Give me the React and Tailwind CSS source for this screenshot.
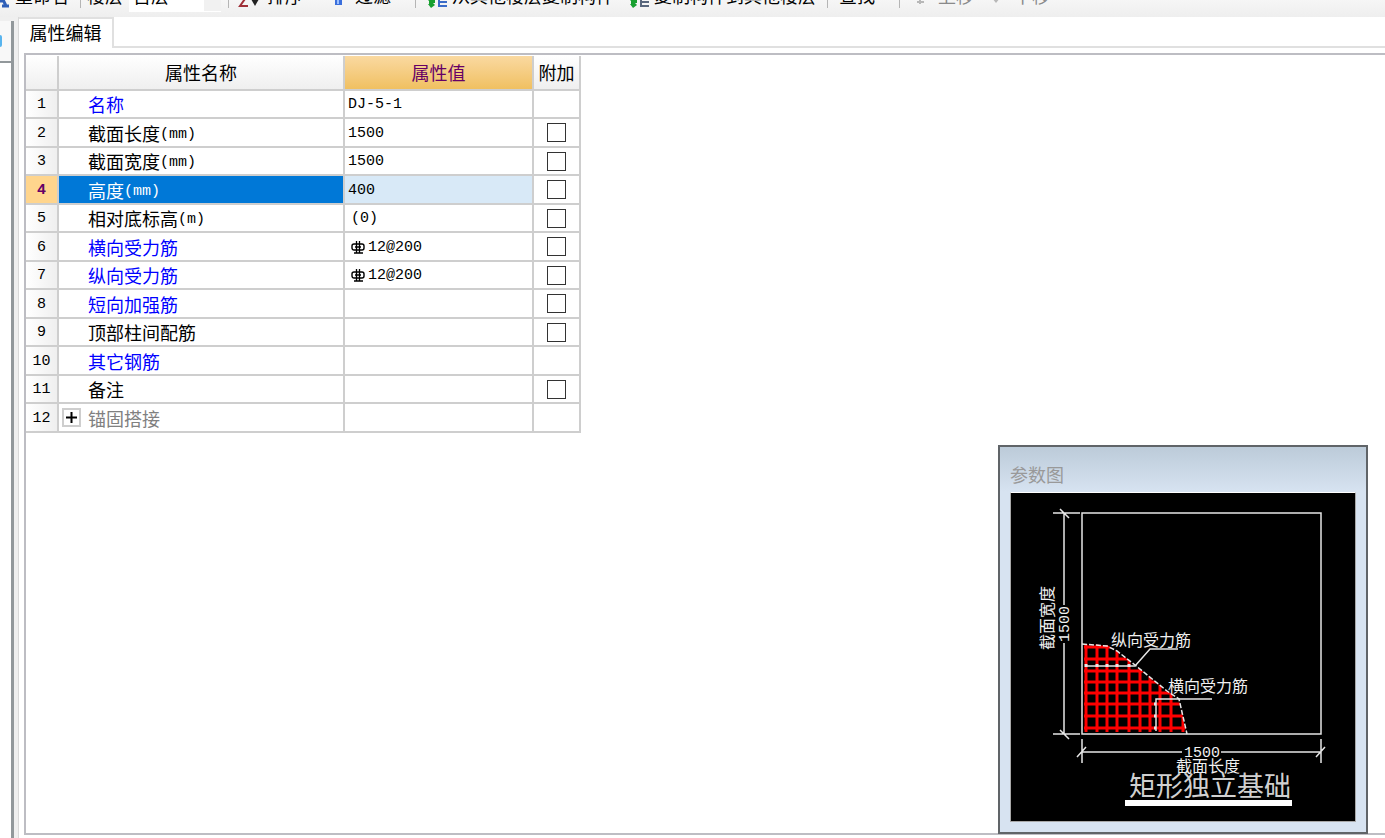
import React, { useState } from "react";

const properties = [
  { name: "名称", value: "DJ-5-1", color: "text-[#0000ff]" },
  { name: "截面长度", unit: "(mm)", value: "1500", extra: true },
  { name: "截面宽度", unit: "(mm)", value: "1500", extra: true },
  { name: "高度", unit: "(mm)", value: "400", extra: true },
  { name: "相对底标高", unit: "(m)", value: "(0)", extra: true, indent: true },
  { name: "横向受力筋", value: "12@200", rebar: true, color: "text-[#0000ff]", extra: true, indent: true },
  { name: "纵向受力筋", value: "12@200", rebar: true, color: "text-[#0000ff]", extra: true, indent: true },
  { name: "短向加强筋", value: "", color: "text-[#0000ff]", extra: true },
  { name: "顶部柱间配筋", value: "", extra: true },
  { name: "其它钢筋", value: "", color: "text-[#0000ff]" },
  { name: "备注", value: "", extra: true },
  { name: "锚固搭接", value: "", color: "text-[#808080]", group: true },
];

// Position des barres du treillis
const barsX = [75, 86, 96, 106, 118, 129, 139, 149, 160, 172];
const barsY = [154, 166, 178, 189, 200, 211, 223, 235];

const Separator = ({ className }) => (
  <span className={`mb-1 h-5 w-px shrink-0 bg-[#b5b5b5] ${className}`} />
);

const ToolButton = ({ children, className }) => (
  <button type="button" className={`mb-1.5 flex shrink-0 items-end leading-[18px] ${className}`}>
    {children}
  </button>
);

const CopyIcon = ({ color }) => (
  <svg width="22" height="18" viewBox="0 0 22 18" className="-mb-0.5 shrink-0">
    <path d="M0 8l4-4v3h5v6H7l2 2-4 3-3-4h1V11z" fill="#18a030" />
    <path d="M13 1v16M13 4h8M13 8h8M13 12h8M13 16h8" stroke={color} strokeWidth="2" />
  </svg>
);

const RebarSign = () => (
  <svg width="14" height="14" viewBox="0 0 14 14" className="mr-[3px] shrink-0" fill="none" stroke="#000">
    <rect x="1" y="3" width="12" height="6" rx="2" strokeWidth="1.4" />
    <path d="M5.5 0v12M8.5 0v12M3 12h9M4 6h6" strokeWidth="1.3" />
  </svg>
);

const Toolbar = () => (
  <div className="flex h-[17px] shrink-0 items-end overflow-hidden bg-linear-to-b from-[#f6f6f6] to-[#eeeeee] pb-[5px]">
    <ToolButton>
      <svg width="9" height="18" viewBox="0 0 9 18" className="-mb-0.5 mr-1.5">
        <path d="M0 3l6 13M0 11h4M2 16h7" stroke="#2f5fb8" strokeWidth="3" fill="none" />
      </svg>
      重命名
    </ToolButton>
    <Separator className="ml-[11px]" />
    <label htmlFor="floor" className="mb-1.5 ml-1.5 shrink-0 leading-[18px]">楼层</label>
    <div className="ml-1.5 flex h-[26px] w-[92px] shrink-0 bg-white">
      <select id="floor" className="w-[75px] appearance-none bg-white pb-1 pl-1 leading-[18px]">
        <option>首层</option>
      </select>
      <span className="grow border-b border-white bg-[#f1f1f1]" />
    </div>
    <Separator className="ml-[7px]" />
    <ToolButton className="ml-[9px]">
      <svg width="25" height="18" viewBox="0 0 25 18" className="-mb-0.5 mr-1">
        <path d="M1 6h8L2 16h8" fill="none" stroke="#a03038" strokeWidth="2" />
        <path d="M17 3v8" stroke="#222" strokeWidth="2" />
        <path d="M13 9h8l-4 7z" fill="#222" />
      </svg>
      排序
    </ToolButton>
    <ToolButton className="ml-[30px]">
      <svg width="12" height="18" viewBox="0 0 12 18" className="-mb-px mr-2.5">
        <path d="M0 2h11L9 8v8H2V8z" fill="#3b6fdc" />
        <path d="M5 8v7" stroke="#9cc0ff" strokeWidth="2" />
      </svg>
      过滤
    </ToolButton>
    <Separator className="ml-6" />
    <ToolButton className="ml-2.5 gap-1">
      <CopyIcon color="#3a6cc8" />
      从其他楼层复制构件
    </ToolButton>
    <ToolButton className="ml-[14px] gap-1">
      <CopyIcon color="#58667c" />
      复制构件到其他楼层
    </ToolButton>
    <Separator className="ml-[11px]" />
    <ToolButton className="ml-[11px]">查找</ToolButton>
    <Separator className="ml-6" />
    <ToolButton className="ml-4 text-[#8a8a8a]">
      <svg width="8" height="18" viewBox="0 0 8 18" className="mr-3.5">
        <path d="M4 2v14M1 14h7" stroke="#b8b8b8" strokeWidth="2" />
      </svg>
      上移
    </ToolButton>
    <ToolButton className="ml-[18px] text-[#8a8a8a]">
      <svg width="8" height="18" viewBox="0 0 8 18" className="mr-3.5">
        <path d="M0 10l4 5 4-5z" fill="#b8b8b8" />
      </svg>
      下移
    </ToolButton>
  </div>
);

const PropertyTable = () => {
  const [selected, setSelected] = useState(3);
  const cell = "border-r-2 border-b-2 border-[#cecece] p-0";
  const head = `${cell} bg-linear-to-b from-white to-[#efefef] pt-0.5 font-normal`;

  return (
    <table className="mt-px w-[555px] table-fixed border-separate border-spacing-0">
      <colgroup>
        <col className="w-[33px]" />
        <col className="w-[286px]" />
        <col className="w-[189px]" />
        <col className="w-[47px]" />
      </colgroup>
      <thead>
        <tr className="h-[35px] leading-[18px]">
          <th className={head}></th>
          <th className={head}>属性名称</th>
          <th className={`${cell} bg-linear-to-b from-[#fad9a0] to-[#f0c060] pt-0.5 font-normal text-[#660066]`}>
            属性值
          </th>
          <th className={head}>附加</th>
        </tr>
      </thead>
      <tbody>
        {properties.map((item, index) => {
          const active = index === selected;
          return (
            <tr
              key={item.name}
              onClick={() => setSelected(index)}
              className="h-7 leading-[18px] even:h-[29px]"
            >
              <th
                className={`${cell} pt-0.5 font-['Liberation_Mono',monospace] text-[15px] ${
                  active
                    ? "bg-[#ffd58d] font-bold text-[#660066]"
                    : "bg-linear-to-r from-white to-[#efefef] font-normal"
                }`}
              >
                {index + 1}
              </th>
              <td className={`${cell} ${active ? "bg-[#0078d7] text-white" : item.color || ""}`}>
                <div className="flex items-center pl-[3px]">
                  <span className="flex w-[26px] shrink-0">
                    {item.group && (
                      <button
                        type="button"
                        aria-label="展开"
                        className="flex size-[19px] items-center justify-center border-2 border-[#cecece] bg-white"
                      >
                        <svg width="11" height="11" viewBox="0 0 11 11" stroke="#000" strokeWidth="2">
                          <path d="M0 5.5h11M5.5 0v11" />
                        </svg>
                      </button>
                    )}
                  </span>
                  <span className="flex items-center pt-1">
                    {item.name}
                    {item.unit && (
                      <span className="font-['Liberation_Mono',monospace] text-[15px]">{item.unit}</span>
                    )}
                  </span>
                </div>
              </td>
              <td
                className={`${cell} font-['Liberation_Mono',monospace] text-[15px] ${
                  active ? "bg-[#d8e9f7]" : ""
                }`}
              >
                <div className={`flex items-center pt-0.5 ${item.indent ? "pl-1.5" : "pl-[3px]"}`}>
                  {item.rebar && <RebarSign />}
                  {item.value}
                </div>
              </td>
              <td className={cell}>
                {item.extra && (
                  <input
                    type="checkbox"
                    aria-label={`附加 ${item.name}`}
                    className="mx-auto block size-[19px] appearance-none border border-[#333333] bg-white checked:bg-[#0078d7]"
                  />
                )}
              </td>
            </tr>
          );
        })}
      </tbody>
    </table>
  );
};

const FootingDrawing = () => (
  <svg
    viewBox="0 0 344 328"
    className="block w-full bg-black font-['Liberation_Mono','Noto_Sans_CJK_SC',monospace]"
    fill="none"
    stroke="#e6e6e6"
    strokeWidth="1.5"
  >
    <defs>
      <clipPath id="mesh">
        <path d="M73 151L96 152L106 158L124 172L156 198L168 206L175 239H73z" />
      </clipPath>
    </defs>

    {/* Contour de la semelle */}
    <rect x="71" y="20" width="239" height="221" />

    {/* Cotes */}
    <path d="M42 20H69M42 241H69M53 20V112M53 150V241M49 16L58 25M49 237L58 246" />
    <path d="M71 246V270M310 246V270M71 259H171M210 259H310M66 264L75 254M305 264L314 254" />

    {/* Treillis */}
    <g clipPath="url(#mesh)" stroke="#ff0000" strokeWidth="3">
      {barsX.map((x) => (
        <path key={x} d={`M${x} 150V240`} />
      ))}
      {barsY.map((y) => (
        <path key={y} d={`M73 ${y}H178`} />
      ))}
    </g>
    <path d="M71 151L96 153L106 158L124 172L156 198L168 206L176 241" strokeDasharray="5 2" />

    {/* Lignes de repère */}
    <path d="M74 173H124L139 156H167" />
    <path d="M75 171v3M86 171v3M96 171v3M106 171v3M118 171v3" strokeWidth="3" />
    <path d="M145 238V206H201" />
    <path d="M143 211h2M143 223h2M143 235h2" strokeWidth="3" />

    <g fill="#f0f0f0" stroke="none" fontSize="16">
      <text x="100" y="153">纵向受力筋</text>
      <text x="157" y="199">横向受力筋</text>
      <text x="165" y="279">截面长度</text>
      <text x="173" y="264" fontSize="15">1500</text>
      <text transform="translate(42 157) rotate(-90)">截面宽度</text>
      <text transform="translate(58 149) rotate(-90)" fontSize="15">1500</text>
      <text x="118" y="303" fontSize="27" fill="#d0d0d0">矩形独立基础</text>
      <rect x="114" y="307" width="167" height="6" fill="#ffffff" />
    </g>
  </svg>
);

const App = () => {
  return (
    <div className="relative flex min-h-screen flex-col overflow-hidden bg-white font-['Liberation_Sans','Noto_Sans_CJK_SC',sans-serif] text-[18px] text-black">
      <Toolbar />

      <div className="flex grow">
        {/* Bord du panneau de gauche */}
        <aside className="flex w-[19px] shrink-0 border-r border-[#d9d9d9] bg-[#efefef] pt-1">
          <div className="flex w-[14px] flex-col border-r-3 border-[#92989b] bg-white">
            <div className="flex h-[42px] items-center border-b-2 border-[#92989b] bg-[#f8f8f8]">
              <span className="h-3 w-0.5 rounded-r-full bg-[#58b4ee]" />
            </div>
          </div>
        </aside>

        <main className="flex min-w-0 grow flex-col pb-[3px]">
          <div className="flex h-[31px] shrink-0">
            <button
              type="button"
              role="tab"
              aria-selected="true"
              className="w-[95px] border-t-2 border-r-2 border-[#e0e0e0] bg-white leading-[18px]"
            >
              属性编辑
            </button>
            <div className="grow border-b-2 border-[#e0e0e0]" />
          </div>
          <section className="mt-[5px] ml-[5px] grow border-y-2 border-l-2 border-[#bdbdc3]">
            <PropertyTable />
          </section>
        </main>
      </div>

      {/* Fenêtre flottante */}
      <div className="absolute right-[17px] bottom-1 w-[370px] border-2 border-[#606468] bg-[#d7e3f1] px-[10px] pb-[10px]">
        <div className="-mx-[10px] flex h-[45px] items-center bg-linear-to-b from-[#bccbd9] to-[#d7e3f1] px-[10px] pt-3 leading-[18px] text-[#999999]">
          参数图
        </div>
        <div className="border border-[#a8a8a8] border-t-white">
          <FootingDrawing />
        </div>
      </div>
    </div>
  );
};

export default App;
